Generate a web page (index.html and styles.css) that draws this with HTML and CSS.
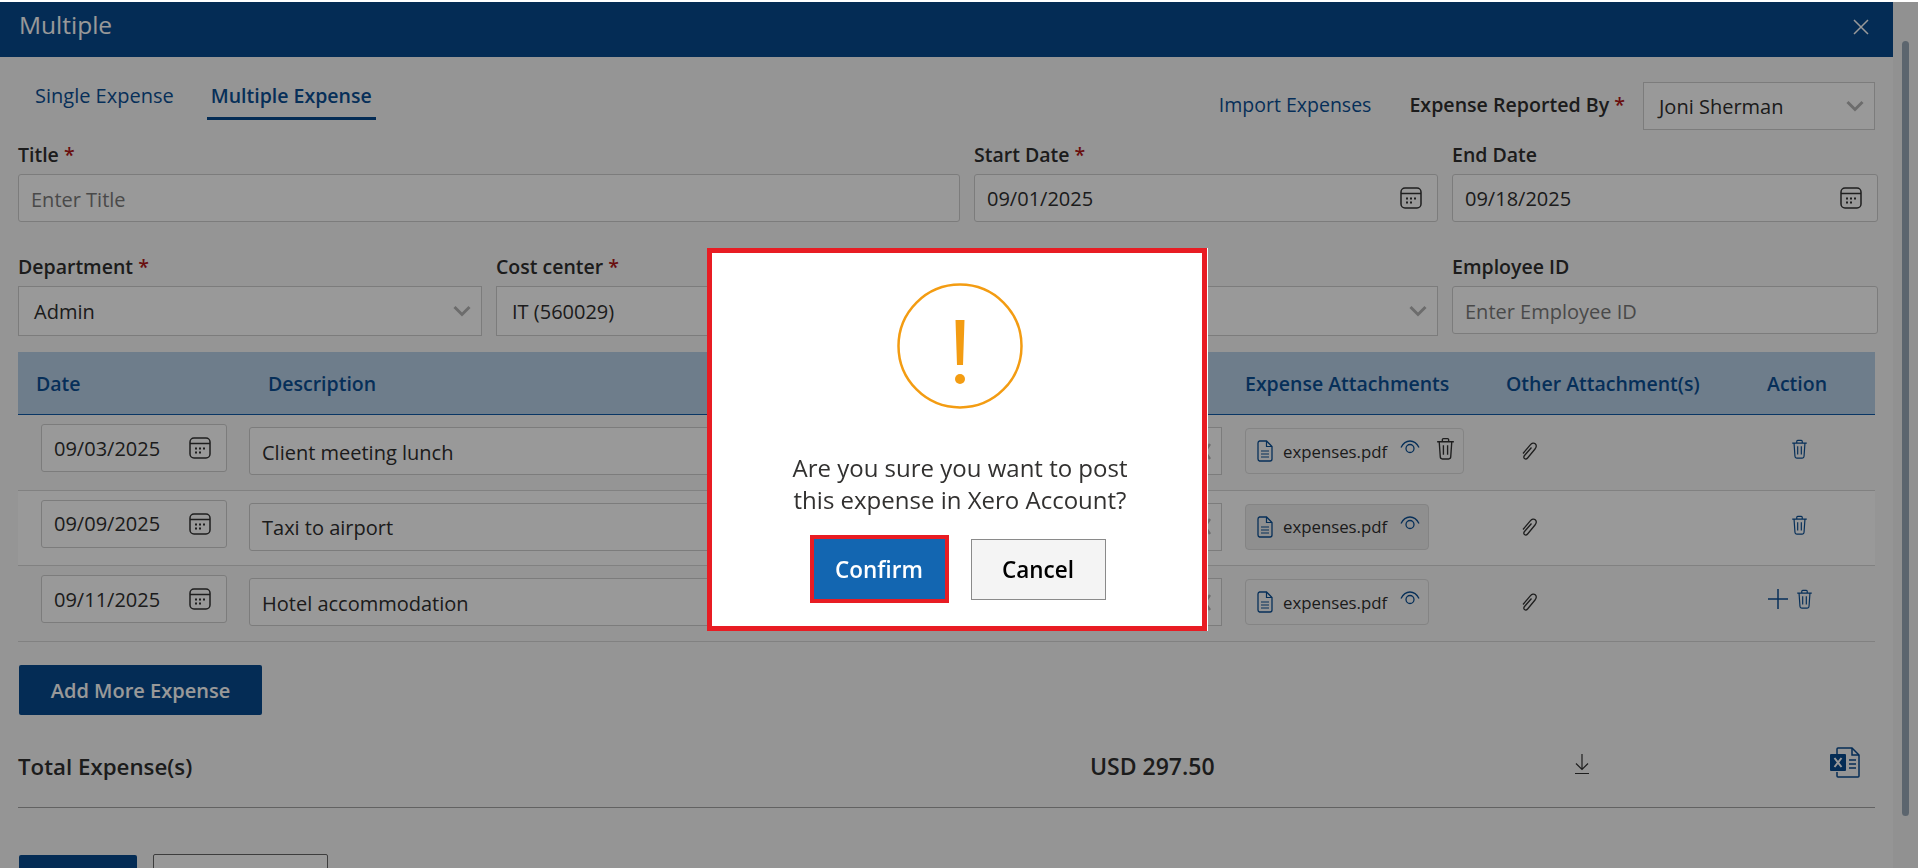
FILE: index.html
```html
<!DOCTYPE html>
<html lang="en">
<head>
  <meta charset="UTF-8" />
  <title>Multiple Expense</title>
  <link rel="stylesheet" href="styles.css">
</head>
<body>
  <svg class="defs" width="0" height="0">
    <symbol id="i-cal" viewBox="0 0 22 22">
      <rect x="1" y="1" width="20" height="20" rx="4" fill="none" stroke="currentColor" stroke-width="1.5"/>
      <path d="M1 6.5h20" stroke="currentColor" stroke-width="1.5"/>
      <path d="M6 10.5h2v2H6zM10 10.5h2v2h-2zM14 10.5h2v2h-2zM6 14.5h2v2H6zM10 14.5h2v2h-2z" fill="currentColor"/>
    </symbol>
    <symbol id="i-file" viewBox="0 0 16 22">
      <path d="M2.5 1h7l5.5 5.5V19a2 2 0 0 1-2 2H2.500a2 2 0 0 1-1.500-2V3a2 2 0 0 1 1.500-2z" fill="none" stroke="currentColor" stroke-width="1.3"/>
      <path d="M9.500 1v5.500H15M4 11h8M4 14h8M4 17h8" fill="none" stroke="currentColor" stroke-width="1.2"/>
    </symbol>
    <symbol id="i-eye" viewBox="0 0 20 14">
      <path d="M1 7.500C3 3.500 6 1 10 1s7 2.500 9 6.500" fill="none" stroke="currentColor" stroke-width="1.3"/>
      <circle cx="10" cy="8.500" r="4" fill="none" stroke="currentColor" stroke-width="1.3"/>
    </symbol>
    <symbol id="i-trash" viewBox="0 0 18 22">
      <path d="M1 4.500h16M6 4.500V2.500a1 1 0 0 1 1-1h4a1 1 0 0 1 1 1v2M3 4.500l1 14.500a2 2 0 0 0 2 2h6a2 2 0 0 0 2-2l1-14.500M7 8v9M11 8v9" fill="none" stroke="currentColor" stroke-width="1.3"/>
    </symbol>
    <symbol id="i-clip" viewBox="0 0 18 20">
      <path d="M11.500 6.500L4.500 14.500c-1 1.200-.9 2.400 0 3.100s2.200.5 3.100-.6L15 8c1.600-2 1.500-4 .2-5.200s-3.300-.8-4.700.9L3 12.500" fill="none" stroke="currentColor" stroke-width="1.300"/>
    </symbol>
    <symbol id="chev" viewBox="0 0 18 12">
      <path d="M1.500 2L9 9.500 16.500 2" fill="none" stroke="currentColor" stroke-width="3"/>
    </symbol>
    <symbol id="i-clear" viewBox="0 0 12 17">
      <path d="M1 1l10 15M11 1L1 16" fill="none" stroke="currentColor" stroke-width="2.500"/>
    </symbol>
  </svg>

  <div class="page">
    <div class="panel">
      <div class="panel-head">
        <span class="panel-title">Multiple</span>
        <svg class="close" width="16" height="16" viewBox="0 0 16 16"><path d="M1 1l14 14M15 1L1 15" stroke="currentColor" stroke-width="1.500"/></svg>
      </div>

      <div class="panel-body">
        <div class="top-row">
          <div class="tabs">
            <span class="tab">Single Expense</span>
            <span class="tab active">Multiple Expense</span>
          </div>
          <div class="top-right">
            <span class="link">Import Expenses</span>
            <span class="label-inline">Expense Reported By <em>*</em></span>
            <div class="field select reported">Joni Sherman<svg class="chev"><use href="#chev"/></svg></div>
          </div>
        </div>

        <div class="form-grid first">
          <div class="span-2">
            <label>Title <em>*</em></label>
            <div class="field ghost">Enter Title</div>
          </div>
          <div>
            <label>Start Date <em>*</em></label>
            <div class="field">09/01/2025<svg class="cal"><use href="#i-cal"/></svg></div>
          </div>
          <div>
            <label>End Date</label>
            <div class="field">09/18/2025<svg class="cal"><use href="#i-cal"/></svg></div>
          </div>
        </div>

        <div class="form-grid second">
          <div>
            <label>Department <em>*</em></label>
            <div class="field select">Admin<svg class="chev"><use href="#chev"/></svg></div>
          </div>
          <div>
            <label>Cost center <em>*</em></label>
            <div class="field select">IT (560029)<svg class="chev"><use href="#chev"/></svg></div>
          </div>
          <div>
            <label>&nbsp;</label>
            <div class="field select"><svg class="chev"><use href="#chev"/></svg></div>
          </div>
          <div>
            <label>Employee ID</label>
            <div class="field ghost">Enter Employee ID</div>
          </div>
        </div>

        <div class="expense-table">
          <div class="t-head">
            <span class="th-date">Date</span>
            <span class="th-desc">Description</span>
            <span>Expense Attachments</span>
            <span>Other Attachment(s)</span>
            <span>Action</span>
          </div>

          <div class="t-row">
            <div class="field small">09/03/2025<svg class="cal"><use href="#i-cal"/></svg></div>
            <div class="desc-cell">
              <div class="field desc">Client meeting lunch</div>
              <div class="field select tail"><svg class="clear"><use href="#i-clear"/></svg></div>
            </div>
            <div class="chip">
              <svg class="file"><use href="#i-file"/></svg>expenses.pdf
              <svg class="eye"><use href="#i-eye"/></svg>
              <svg class="chip-trash"><use href="#i-trash"/></svg>
            </div>
            <svg class="clip"><use href="#i-clip"/></svg>
            <div class="actions"><svg class="trash"><use href="#i-trash"/></svg></div>
          </div>

          <div class="t-row alt">
            <div class="field small">09/09/2025<svg class="cal"><use href="#i-cal"/></svg></div>
            <div class="desc-cell">
              <div class="field desc">Taxi to airport</div>
              <div class="field select tail"><svg class="clear"><use href="#i-clear"/></svg></div>
            </div>
            <div class="chip">
              <svg class="file"><use href="#i-file"/></svg>expenses.pdf
              <svg class="eye"><use href="#i-eye"/></svg>
            </div>
            <svg class="clip"><use href="#i-clip"/></svg>
            <div class="actions"><svg class="trash"><use href="#i-trash"/></svg></div>
          </div>

          <div class="t-row">
            <div class="field small">09/11/2025<svg class="cal"><use href="#i-cal"/></svg></div>
            <div class="desc-cell">
              <div class="field desc">Hotel accommodation</div>
              <div class="field select tail"><svg class="clear"><use href="#i-clear"/></svg></div>
            </div>
            <div class="chip">
              <svg class="file"><use href="#i-file"/></svg>expenses.pdf
              <svg class="eye"><use href="#i-eye"/></svg>
            </div>
            <svg class="clip"><use href="#i-clip"/></svg>
            <div class="actions last">
              <svg class="plus" viewBox="0 0 20 20"><path d="M10 0v20M0 10h20" stroke="currentColor" stroke-width="1.500"/></svg>
              <svg class="trash"><use href="#i-trash"/></svg>
            </div>
          </div>
        </div>

        <button class="btn-add">Add More Expense</button>

        <div class="total-row">
          <span class="total-label">Total Expense(s)</span>
          <span class="total-value">USD 297.50</span>
          <svg class="download" viewBox="0 0 16 20"><path d="M8 0v15M2 9.500l6 6 6-6M1 19.500h14" fill="none" stroke="currentColor" stroke-width="1.200"/></svg>
          <svg class="excel" viewBox="0 0 30 31">
            <path d="M7 7V2a1 1 0 0 1 1-1h14l7 7v21a1 1 0 0 1-1 1H8a1 1 0 0 1-1-1v-4" fill="none" stroke="currentColor" stroke-width="1.500"/>
            <path d="M22 1v7h7M19 13h7M19 17h7M19 21h7" fill="none" stroke="currentColor" stroke-width="1.500"/>
            <rect x="0" y="7" width="16" height="17" rx="1" fill="currentColor"/>
            <path d="M4.500 11l7 9M11.500 11l-7 9" stroke="#fff" stroke-width="2"/>
          </svg>
        </div>

        <div class="footer-btns">
          <button class="btn-save"></button>
          <button class="btn-outline"></button>
        </div>
      </div>
    </div>
    <div class="scrollbar"><div class="thumb"></div></div>
  </div>

  <div class="overlay">
    <div class="confirm-box">
      <svg class="warn" viewBox="0 0 126 126">
        <circle cx="63" cy="63" r="61.500" fill="none" stroke="currentColor" stroke-width="2.500"/>
        <path d="M58.500 37h9l-1.500 45h-6z" fill="currentColor"/>
        <circle cx="63" cy="96" r="5" fill="currentColor"/>
      </svg>
      <p>Are you sure you want to post<br>this expense in Xero Account?</p>
      <div class="confirm-btns">
        <button class="btn-confirm">Confirm</button>
        <button class="btn-cancel">Cancel</button>
      </div>
    </div>
  </div>
</body>
</html>
```

FILE: styles.css
```css
* {
  box-sizing: border-box;
}
html, body {
  margin: 0;
  height: 100%;
  overflow: hidden;
}
body {
  font-family: "Open Sans", "Noto Sans", sans-serif;
  font-size: 20px;
  color: #2f2f2f;
  background: #fff;
  padding-top: 2px;
}
.defs {
  position: absolute;
}
em {
  color: #b01818;
  font-style: normal;
}
.page {
  display: flex;
  height: 866px;
}
.panel {
  width: 1893px;
  height: 866px;
  overflow: hidden;
  background: #f9f9f9;
}
.scrollbar {
  width: 25px;
  padding: 39px 9px 0;
  background: #f2f2f2;
}
.thumb {
  width: 7px;
  height: 775px;
  border-radius: 4px;
  background: #9aa9b8;
}
.panel-head {
  height: 55px;
  background: #084a8e;
  color: #fff;
  display: flex;
  justify-content: space-between;
  align-items: flex-start;
  padding: 6px 24px 0 19px;
}
.panel-title {
  font-size: 24.5px;
}
.close {
  margin-top: 11px;
  color: #fff;
}
.panel-body {
  padding: 0 18px;
}
.top-row {
  display: flex;
  justify-content: space-between;
  height: 73px;
}
.tabs {
  display: flex;
  gap: 29px;
  padding-left: 13px;
  height: 63px;
  align-items: flex-end;
}
.tab {
  color: #0b4f94;
  line-height: 27px;
  padding: 0 4px 8px;
  border-bottom: 3px solid transparent;
}
.tab.active {
  font-weight: 600;
  font-size: 19.5px;
  border-bottom-color: #084a8e;
}
.top-right {
  display: flex;
  align-items: flex-end;
  gap: 38px;
}
.link {
  color: #0b4f94;
  font-size: 19.5px;
  line-height: 27px;
  margin-bottom: 12px;
}
.label-inline {
  font-weight: 600;
  font-size: 19.6px;
  line-height: 27px;
  margin-bottom: 12px;
  margin-right: -20px;
}
.form-grid {
  display: grid;
  grid-template-columns: 464px 464px 464px 426px;
  column-gap: 14px;
  align-items: start;
}
.form-grid.first {
  margin-top: 13px;
}
.form-grid.second {
  margin-top: 33px;
}
.span-2 {
  grid-column: span 2;
}
label {
  display: block;
  font-weight: 600;
  font-size: 19.5px;
  line-height: 24px;
  margin-bottom: 7px;
}
.field {
  height: 48px;
  border: 1px solid #cfcfcf;
  border-radius: 3px;
  background: #fff;
  display: flex;
  align-items: center;
  justify-content: space-between;
  padding: 0 12px;
  white-space: nowrap;
}
.ghost {
  color: #7b7b7b;
  padding-top: 2px;
}
.select {
  height: 50px;
  border-radius: 0;
  padding: 0 10px 0 15px;
}
.reported.select {
  width: 232px;
  height: 48px;
}
.chev {
  width: 18px;
  height: 12px;
  margin-left: auto;
  color: #b5b5b5;
  flex: none;
}
.clear {
  width: 12px;
  height: 17px;
  margin-left: auto;
  color: #b5b5b5;
  flex: none;
}
.cal {
  width: 22px;
  height: 22px;
  margin-right: 3px;
  color: #333;
  flex: none;
}
.expense-table {
  margin-top: 16px;
}
.t-head {
  height: 63px;
  background: #b8d0e8;
  border-bottom: 1px solid #0f5ba8;
  display: grid;
  grid-template-columns: 219px 996px 261px 261px 120px;
  align-items: center;
  color: #0b4f94;
  font-weight: 600;
  font-size: 19.5px;
}
.t-head span {
  padding-left: 12px;
}
.t-head .th-date {
  padding-left: 18px;
}
.t-head .th-desc {
  padding-left: 31px;
}
.t-row {
  height: 75.5px;
  display: grid;
  grid-template-columns: 219px 996px 261px 261px 120px;
  align-items: start;
  border-bottom: 1px solid #d8d8d8;
}
.t-row.alt {
  background: #fff;
}
.small {
  width: 186px;
  margin: 9px 0 0 23px;
}
.desc-cell {
  display: flex;
  gap: 12px;
  margin: 12px 11px 0 12px;
}
.desc {
  flex: 1;
  padding-top: 2px;
}
.tail {
  width: 212px;
  height: 48px;
}
.chip {
  justify-self: start;
  margin: 13px 0 0 12px;
  height: 46px;
  padding: 0 8px 0 11px;
  display: flex;
  align-items: center;
  border: 1px solid #dcdcdc;
  border-radius: 4px;
  font-size: 16.8px;
}
.t-row.alt .chip {
  background: #eee;
}
.file {
  width: 16px;
  height: 22px;
  color: #0b4f94;
  margin-right: 10px;
}
.eye {
  width: 20px;
  height: 14px;
  color: #0b4f94;
  margin: -8px 0 0 13px;
}
.chip-trash {
  width: 19px;
  height: 23px;
  color: #333;
  margin: -6px 0 0 16px;
}
.clip {
  width: 18px;
  height: 20px;
  color: #333;
  margin: 26px 0 0 26px;
}
.actions {
  display: flex;
  padding: 24px 0 0 36px;
  align-items: flex-start;
}
.actions.last {
  padding: 23px 0 0 13px;
  gap: 8px;
  align-items: center;
}
.trash {
  width: 17px;
  height: 20px;
  color: #0b4f94;
}
.plus {
  width: 20px;
  height: 20px;
  color: #0b4f94;
}
.btn-add {
  display: block;
  margin: 23.5px 0 0 1px;
  width: 243px;
  height: 50px;
  border: none;
  border-radius: 2px;
  background: #084a8e;
  color: #fff;
  font: 600 20px "Open Sans", sans-serif;
}
.total-row {
  margin-top: 29px;
  height: 64px;
  padding-bottom: 19px;
  border-bottom: 1px solid #a4a4a4;
  display: flex;
  align-items: center;
  font-size: 22.3px;
  font-weight: 600;
}
.total-label {
  width: 1072px;
}
.total-value {
  width: 484px;
  font-size: 23px;
}
.download {
  width: 16px;
  height: 20px;
  color: #333;
  margin-top: -4px;
}
.excel {
  width: 30px;
  height: 31px;
  color: #084a8e;
  margin: -7px 0 0 240px;
}
.footer-btns {
  display: flex;
  align-items: flex-end;
  gap: 16px;
  margin: 46px 0 0 1px;
}
.btn-save {
  width: 118px;
  height: 50px;
  border: none;
  border-radius: 2px;
  background: #084a8e;
}
.btn-outline {
  width: 175px;
  height: 51px;
  border: 1px solid #666;
  border-radius: 2px;
  background: #fff;
}
.overlay {
  position: fixed;
  top: 2px;
  left: 0;
  right: 0;
  bottom: 0;
  background: rgba(0, 0, 0, 0.4);
}
.confirm-box {
  position: absolute;
  left: 707px;
  top: 246px;
  width: 500px;
  height: 383px;
  background: #fff;
  border: 5px solid #e81c23;
  box-shadow: 1px 0 0 #fff;
  padding: 30px 0 0 6px;
  text-align: center;
}
.warn {
  display: block;
  width: 126px;
  height: 126px;
  margin: 0 auto;
  color: #f39c12;
}
.confirm-box p {
  margin: 43px 0 0;
  font-size: 24px;
  line-height: 32px;
  color: #323130;
}
.confirm-btns {
  display: flex;
  justify-content: center;
  align-items: center;
  gap: 22px;
  margin: 19px 0 0 -5px;
}
.btn-confirm {
  width: 139px;
  height: 68px;
  border: 4px solid #e81c23;
  background: #1366b1;
  color: #fff;
  font: 600 22.500px "Open Sans", sans-serif;
}
.btn-cancel {
  width: 135px;
  height: 61px;
  border: 1px solid #8a8a8a;
  background: #f4f4f4;
  color: #000;
  font: 600 22.500px "Open Sans", sans-serif;
}
```
